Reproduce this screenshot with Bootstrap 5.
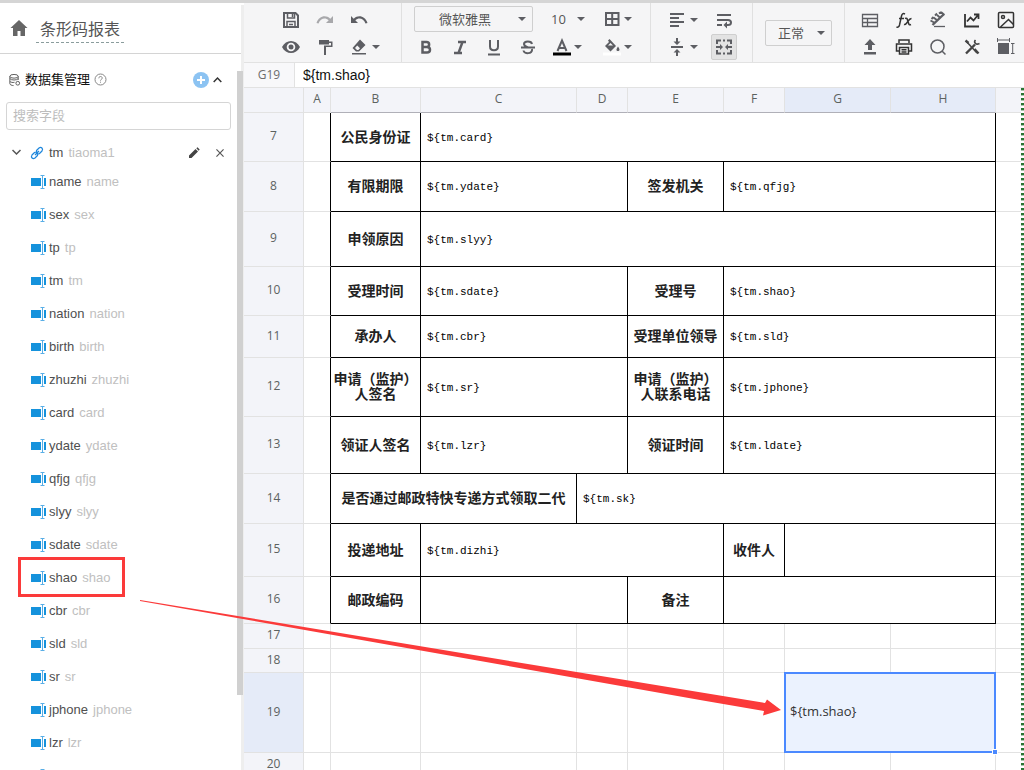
<!DOCTYPE html>
<html lang="zh-CN">
<head>
<meta charset="utf-8">
<meta name="viewport" content="width=device-width, initial-scale=1">
<title>条形码报表</title>
<link href="https://cdn.jsdelivr.net/npm/bootstrap@5.3.0/dist/css/bootstrap.min.css" rel="stylesheet">
<style>
:root { --ink: #5d5e63; --line: #e2e2e2; --head: #f3f4f9; --pick: #4b89ff; --mark-red: #fb3a3a; }
body { font-family: "Open Sans", "Noto Sans CJK SC", sans-serif; font-size: 13px; line-height: 20px; color: #333; border-top: 3px solid #d5d5d5; background: #fff; }
svg { display: block; }
.icon { width: 18px; height: 18px; fill: none; stroke: currentColor; stroke-width: 2; }
.icon-solid { fill: currentColor; stroke: none; }

/* sidebar */
.sidebar { width: 244px; background: #fff; font-family: "Liberation Sans", "Noto Sans CJK SC", sans-serif; }
.sidebar-top { height: 51px; border-bottom: 1px solid #d4d4d4; padding-left: 10px; color: #666; }
.report-title { font-size: 16px; line-height: 24px; color: #555; border-bottom: 1px dashed #8a9c9c; padding: 4px 4px 0; }
.set-title { font-size: 13px; color: #111; }
.set-row { padding: 16px 22px 4px 8px; }
.search-row { padding: 8px 13px 4px 6px; }
.source-row { padding: 9px 20px 3px 8px; color: #4f4f4f; }
.field-search { height: 28px; font-size: 13px; padding: 0 6px; border: 1px solid #d5d5d5; border-radius: 3px; }
.field-search::placeholder { color: #bdbdbd; }
.ghost { color: #c0c0c0; margin-left: 5px; }
.field-list li { height: 33px; padding-left: 31px; }
.field-list a { color: #4f4f4f; }
.field-icon { width: 15px; height: 14px; margin-right: 3px; }
.marked::after { content: ""; position: absolute; left: 18px; top: -5px; width: 107px; height: 40px; border: 3px solid var(--mark-red); }
.scroll-track { right: 0; top: 2px; bottom: 0; width: 7px; border-right: 3px solid #eee; }
.scroll-thumb { right: 1px; top: 68px; height: 624px; width: 6px; background: #d0d0d0; }
.icon-btn { border: 0; background: none; padding: 0; color: var(--ink); display: flex; align-items: center; justify-content: center; }

/* toolbar */
.toolbar { height: 60px; background: #f5f5f6; border-bottom: 1px solid #e2e2e2; color: var(--ink); }
.tool-group { border-right: 1px solid #e0e0e0; }
.group-file { width: 158px; padding-left: 30px; }
.group-font { width: 249px; padding: 3px 0 0 12px; }
.group-align { width: 102px; padding-left: 9px; }
.group-format { width: 92px; padding-left: 12px; }
.tool-grid { display: grid; grid-auto-columns: 34px; grid-template-rows: 26px 28px; grid-auto-flow: column; padding-top: 4px; }
.tool-grid > .icon-btn { width: 100%; }
.caret-col { grid-auto-columns: 10px; margin-left: -5px; }
.wrap-col { grid-auto-columns: 26px; margin-left: 12px; }
.style-row { height: 30px; margin-left: -5px; }
.style-row > .icon-btn { width: 34px; }
.split { display: flex; gap: 2px; }
.caret-btn { width: 10px; }
.caret-btn::before { content: ""; border: 4px solid transparent; border-top-color: var(--ink); border-bottom: 0; }
.tool-active { height: 26px; align-self: center; background: #e3e3e3; border: 1px solid #cfcfcf; border-radius: 2px; }
.pick-box { appearance: none; height: 26px; border: 1px solid #cfcfcf; border-radius: 2px; color: #555; font-size: 13px; line-height: 20px; background: url("data:image/svg+xml,%3Csvg xmlns='http://www.w3.org/2000/svg' width='8' height='4'%3E%3Cpath d='M0 0h8L4 4z' fill='%235d5e63'/%3E%3C/svg%3E") no-repeat right 6px center; }
.pick-font { width: 119px; padding: 0 24px; }
.pick-size { width: 44px; border: 0; margin: 0 14px 0 12px; padding: 0 0 0 6px; background-position: right 4px center; }
.pick-format { width: 67px; padding: 0 12px; }

/* formula bar */
.formula-bar { height: 25px; border-bottom: 1px solid #e2e2e2; }
.cell-name { width: 51px; background: #f8f8fa; border-right: 1px solid #e2e2e2; font-size: 12px; color: #6d6d6d; }
.formula { border: 0; font-family: "Liberation Sans", sans-serif; font-size: 14px; color: #111; padding: 0 8px; }

/* sheet */
.sheet { width: 100%; table-layout: fixed; border-collapse: separate; border-spacing: 0; }
.sheet th, .sheet td { border: 0 solid var(--line); border-width: 0 1px 1px 0; padding: 0; vertical-align: middle; overflow: hidden; }
.sheet thead th, .sheet tbody > tr > th { background: var(--head); font-weight: 400; font-size: 12px; text-align: center; color: #5c625f; }
.sheet thead th { border-bottom-color: #b0b0b8; line-height: 16px; padding-bottom: 2px; }
.sheet thead th:first-child, .sheet thead th:nth-child(2), .sheet thead th:last-child { border-bottom-color: var(--line); }
.sheet tbody > tr > th { padding-bottom: 2px; }
.sheet .current { background: #e5ebf8 !important; }
.form-row > td:not(:last-child) { border-right-color: #000; }
.form-row > td:not(:last-child):not(:nth-child(2)) { border-bottom-color: #000; }
.sheet .caption-cell { font-family: "Noto Sans CJK SC", sans-serif; font-weight: 700; font-size: 14px; line-height: 15px; text-align: center; color: #222; padding-bottom: 2px; }
.sheet .bind { font-family: "Liberation Mono", "Noto Sans CJK SC", monospace; font-size: 11px; color: #000; padding: 1px 0 0 6px; }
.sheet .selected { position: relative; overflow: visible; padding: 0 0 3px 5px; color: #333; background: #ebf2fe; }
.selected::before { content: ""; position: absolute; inset: -1px; border: 2px solid var(--pick); }
.selected::after { content: ""; position: absolute; right: -3px; bottom: -3px; width: 6px; height: 6px; background: var(--pick); border: 1px solid #fff; }
.page-edge { top: 0; bottom: 0; right: 0; width: 3px; background: repeating-linear-gradient(#2c7434 0 2px, #a9c4ac 2px 3px, #fff 3px 5px); }
.guide-arrow { left: 140px; top: 600px; pointer-events: none; }
</style>
</head>
<body class="d-flex vh-100 overflow-hidden">

<svg class="d-none" aria-hidden="true">
  <symbol id="field" viewBox="0 0 15 14"><path fill="#1592dc" d="M0 3h10v8H0zM13 3h2v8h-2z"/><path d="M9.500 .5h4M11.500 .5v13M9.500 13.500h4" stroke="#59aee6" fill="none"/></symbol>
</svg>

<aside class="sidebar flex-shrink-0 position-relative overflow-hidden">
  <header class="sidebar-top d-flex align-items-center">
    <a href="#" class="text-reset me-2" aria-label="首页"><svg width="18" height="18" viewBox="0 0 18 18" fill="currentColor"><path d="M9 1 .5 9H3v8h4.500v-5h3v5H15V9h2.500z"/></svg></a>
    <h1 class="report-title fw-normal m-0">条形码报表</h1>
  </header>

  <section>
    <div class="set-row d-flex align-items-center">
      <svg width="13" height="14" viewBox="0 0 14 14" fill="none" stroke="#555"><ellipse cx="6.500" cy="3" rx="4.500" ry="2"/><path d="M2 3v8c0 1 2 2 4 2M11 3v4M2 5.500c1 2 8 2 9 0M2 8.500c1 1 3 1.500 5 1"/><circle cx="10.500" cy="10.500" r="2"/></svg>
      <h2 class="set-title fw-normal m-0 ms-1 lh-base">数据集管理</h2>
      <svg class="ms-1" width="13" height="13" viewBox="0 0 13 13" fill="none" stroke="#888"><circle cx="6.500" cy="6.500" r="5.500"/><path d="M4.800 5.300c0-2.500 3.500-2.200 3.500-.2 0 1.200-1.800 1.200-1.800 2.500M6.500 8.700v1"/></svg>
      <button type="button" class="icon-btn ms-auto" aria-label="新增数据集"><svg width="16" height="16" viewBox="0 0 16 16"><circle cx="8" cy="8" r="8" fill="#8cc3f2"/><path d="M8 4v8M4 8h8" stroke="#fff" stroke-width="2"/></svg></button>
      <button type="button" class="icon-btn ms-1" aria-label="收起"><svg width="9" height="8" viewBox="0 0 9 8" fill="none" stroke="#333" stroke-width="1.500"><path d="M.7 6 4.500 2l3.800 4"/></svg></button>
    </div>
    <div class="search-row"><input type="search" class="field-search w-100 d-block" placeholder="搜索字段" aria-label="搜索字段"></div>

    <div class="source-row d-flex align-items-center">
      <button type="button" class="icon-btn mx-1" aria-label="折叠"><svg width="9" height="7" viewBox="0 0 9 7" fill="none" stroke="#555" stroke-width="1.500"><path d="M.5 1 4.500 5l4-4"/></svg></button>
      <svg class="ms-1 me-1" width="16" height="14" viewBox="0 0 14 14" fill="none" stroke="#1d86dc" stroke-width="1.200"><path d="M6.500 4.500 9 2c2.200-1.600 4.600.6 3 3L9.500 7.500c-1 .8-2.500.6-3-.3zM7.500 9.500 5 12c-2.200 1.600-4.600-.6-3-3l2.500-2.500c1-.8 2.500-.6 3 .3zM9 5 5 9"/></svg>
      <span>tm</span><span class="ghost">tiaoma1</span>
      <button type="button" class="icon-btn ms-auto" aria-label="编辑"><svg width="12" height="12" viewBox="0 0 12 12" fill="#444"><path d="M1 11V8.500L7.500 2 10 4.500 3.500 11zM8.300 1.300 9.500.3l2.200 2.200-1 1.200z"/></svg></button>
      <button type="button" class="icon-btn ms-3" aria-label="删除"><svg width="8" height="8" viewBox="0 0 9 9" stroke="#555" stroke-width="1.300"><path d="m.5.5 8 8m0-8-8 8"/></svg></button>
    </div>

    <ul class="field-list list-unstyled m-0">
      <li class="d-flex align-items-center"><svg class="field-icon"><use href="#field"/></svg><a href="#" class="text-decoration-none">name</a><span class="ghost">name</span></li>
      <li class="d-flex align-items-center"><svg class="field-icon"><use href="#field"/></svg><a href="#" class="text-decoration-none">sex</a><span class="ghost">sex</span></li>
      <li class="d-flex align-items-center"><svg class="field-icon"><use href="#field"/></svg><a href="#" class="text-decoration-none">tp</a><span class="ghost">tp</span></li>
      <li class="d-flex align-items-center"><svg class="field-icon"><use href="#field"/></svg><a href="#" class="text-decoration-none">tm</a><span class="ghost">tm</span></li>
      <li class="d-flex align-items-center"><svg class="field-icon"><use href="#field"/></svg><a href="#" class="text-decoration-none">nation</a><span class="ghost">nation</span></li>
      <li class="d-flex align-items-center"><svg class="field-icon"><use href="#field"/></svg><a href="#" class="text-decoration-none">birth</a><span class="ghost">birth</span></li>
      <li class="d-flex align-items-center"><svg class="field-icon"><use href="#field"/></svg><a href="#" class="text-decoration-none">zhuzhi</a><span class="ghost">zhuzhi</span></li>
      <li class="d-flex align-items-center"><svg class="field-icon"><use href="#field"/></svg><a href="#" class="text-decoration-none">card</a><span class="ghost">card</span></li>
      <li class="d-flex align-items-center"><svg class="field-icon"><use href="#field"/></svg><a href="#" class="text-decoration-none">ydate</a><span class="ghost">ydate</span></li>
      <li class="d-flex align-items-center"><svg class="field-icon"><use href="#field"/></svg><a href="#" class="text-decoration-none">qfjg</a><span class="ghost">qfjg</span></li>
      <li class="d-flex align-items-center"><svg class="field-icon"><use href="#field"/></svg><a href="#" class="text-decoration-none">slyy</a><span class="ghost">slyy</span></li>
      <li class="d-flex align-items-center"><svg class="field-icon"><use href="#field"/></svg><a href="#" class="text-decoration-none">sdate</a><span class="ghost">sdate</span></li>
      <li class="d-flex align-items-center position-relative marked"><svg class="field-icon"><use href="#field"/></svg><a href="#" class="text-decoration-none">shao</a><span class="ghost">shao</span></li>
      <li class="d-flex align-items-center"><svg class="field-icon"><use href="#field"/></svg><a href="#" class="text-decoration-none">cbr</a><span class="ghost">cbr</span></li>
      <li class="d-flex align-items-center"><svg class="field-icon"><use href="#field"/></svg><a href="#" class="text-decoration-none">sld</a><span class="ghost">sld</span></li>
      <li class="d-flex align-items-center"><svg class="field-icon"><use href="#field"/></svg><a href="#" class="text-decoration-none">sr</a><span class="ghost">sr</span></li>
      <li class="d-flex align-items-center"><svg class="field-icon"><use href="#field"/></svg><a href="#" class="text-decoration-none">jphone</a><span class="ghost">jphone</span></li>
      <li class="d-flex align-items-center"><svg class="field-icon"><use href="#field"/></svg><a href="#" class="text-decoration-none">lzr</a><span class="ghost">lzr</span></li>
      <li class="d-flex align-items-center"><svg class="field-icon"><use href="#field"/></svg></li>
    </ul>
  </section>
  <div class="scroll-track position-absolute"></div>
  <div class="scroll-thumb position-absolute"></div>
</aside>

<main class="flex-grow-1 d-flex flex-column overflow-hidden">
  <div class="toolbar d-flex flex-shrink-0 overflow-hidden" role="toolbar" aria-label="工具栏">
    <div class="tool-group group-file d-flex flex-shrink-0">
      <div class="tool-grid">
        <button type="button" class="icon-btn" aria-label="保存"><svg class="icon" viewBox="0 0 18 18"><path d="M2 2h11.500L16 4.500V16H2z"/><path d="M5.500 2v5h7V2M5 16v-5.500h8V16M10.500 3v3M7 13.500h4" stroke-width="1.500"/></svg></button>
        <button type="button" class="icon-btn" aria-label="预览"><svg class="icon icon-solid" viewBox="0 0 18 18"><path fill-rule="evenodd" d="M0 9c4-8 14-8 18 0-4 8-14 8-18 0zm9-4.300a4.300 4.300 0 1 0 0 8.600 4.300 4.300 0 0 0 0-8.600zM9 6.500a2.500 2.500 0 1 1 0 5 2.500 2.500 0 0 1 0-5z"/></svg></button>
        <button type="button" class="icon-btn" aria-label="重做"><svg class="icon icon-solid opacity-50" viewBox="0 0 18 18"><path d="M17 5v7h-7l2.700-2.700C9 6 4.500 7.500 2.500 12.500L.5 12C3 5 9.500 3.500 14.300 7.700z"/></svg></button>
        <button type="button" class="icon-btn" aria-label="格式刷"><svg class="icon icon-solid" viewBox="0 0 18 18"><path d="M3 2h10v1.500h3.500V9H10v8H8V7.500h7V5h-2v1.500H3z"/></svg></button>
        <button type="button" class="icon-btn" aria-label="撤销"><svg class="icon icon-solid" viewBox="0 0 18 18"><path d="M1 5v7h7L5.300 9.300C9 6 13.500 7.500 15.500 12.500l2-.5C15 5 8.500 3.500 3.700 7.700z"/></svg></button>
        <button type="button" class="icon-btn" aria-label="清除"><svg class="icon icon-solid" viewBox="0 0 18 18"><path fill-rule="evenodd" d="M10 1.500 15.500 7 9 13.500H6L2.500 10zM5 10l2 2h1.300l1.700-1.700-2.800-2.800zM2 15h14v1.500H2z"/></svg></button>
      </div>
      <div class="tool-grid caret-col"><span></span><button type="button" class="icon-btn caret-btn" aria-label="清除选项"></button></div>
    </div>

    <div class="tool-group group-font flex-shrink-0">
      <div class="d-flex">
        <select class="pick-box pick-font" aria-label="字体"><option>微软雅黑</option></select>
        <select class="pick-box pick-size" aria-label="字号"><option>10</option></select>
        <div class="split">
          <button type="button" class="icon-btn" aria-label="边框"><svg class="icon" viewBox="0 0 18 18"><path d="M3 3h12.500v12H3zM9.200 3v12M3 9h12.500"/></svg></button>
          <button type="button" class="icon-btn caret-btn" aria-label="边框选项"></button>
        </div>
      </div>
      <div class="style-row d-flex">
        <button type="button" class="icon-btn" aria-label="加粗"><svg class="icon" viewBox="0 0 18 18"><path d="M5.500 4h4c3.500 0 3.500 5 0 5h-4zM5.500 9H10c4 0 4 5.500 0 5.500H5.500z" stroke-width="2.500"/></svg></button>
        <button type="button" class="icon-btn" aria-label="斜体"><svg class="icon" viewBox="0 0 18 18"><path d="M7 4h8M3 15h8M11.500 4l-4 11" stroke-width="2.400"/></svg></button>
        <button type="button" class="icon-btn" aria-label="下划线"><svg class="icon" viewBox="0 0 18 18"><path d="M5 2v6.500c0 5 8 5 8 0V2M3 16.500h12"/></svg></button>
        <button type="button" class="icon-btn" aria-label="删除线"><svg class="icon" viewBox="0 0 18 18"><path d="M2 9.500h14M13 6c-.5-3.500-8-3.500-8 0 0 2 2 2.500 4 3.500M13 11c1 5-8 5.500-8.500 1.500"/></svg></button>
        <div class="split ms-2">
          <button type="button" class="icon-btn" aria-label="文字颜色"><svg class="icon" viewBox="0 0 18 18"><path d="M4.500 13 9 2.500 13.500 13M6 10h6"/><path d="M0 16h18" stroke="#000" stroke-width="3"/></svg></button>
          <button type="button" class="icon-btn caret-btn" aria-label="颜色选项"></button>
        </div>
        <div class="split ms-3 ps-1">
          <button type="button" class="icon-btn" aria-label="填充颜色"><svg class="icon icon-solid" viewBox="0 0 18 18"><path fill-rule="evenodd" d="M6.500 1 13 8l-5.500 5.500L2 8l4-4-1-1.500zM7.500 5 5 7.500h5zM15 8.500c2.500 3.500 1.500 4.500 0 4.500s-2.500-1 0-4.500z"/><path fill="#fff" d="M0 14.500h18v3H0z"/></svg></button>
          <button type="button" class="icon-btn caret-btn" aria-label="填充选项"></button>
        </div>
      </div>
    </div>

    <div class="tool-group group-align d-flex flex-shrink-0">
      <div class="tool-grid">
        <button type="button" class="icon-btn" aria-label="水平对齐"><svg class="icon" viewBox="0 0 18 18"><path d="M2 3h14M2 7h9M2 11h14M2 15h9"/></svg></button>
        <button type="button" class="icon-btn" aria-label="垂直对齐"><svg class="icon" viewBox="0 0 18 18"><path d="M3 9h12M9 0v4M9 18v-4"/><path class="icon-solid" d="M5.500 3.500h7L9 7zM5.500 14.500h7L9 11z"/></svg></button>
      </div>
      <div class="tool-grid caret-col">
        <button type="button" class="icon-btn caret-btn" aria-label="水平对齐选项"></button>
        <button type="button" class="icon-btn caret-btn" aria-label="垂直对齐选项"></button>
      </div>
      <div class="tool-grid wrap-col">
        <button type="button" class="icon-btn" aria-label="自动换行"><svg class="icon" viewBox="0 0 18 18"><path d="M2 4h14M2 9h11c4 0 4 5 0 5h-2M2 14h5"/><path class="icon-solid" d="M12 10.500v7L8.500 14z"/></svg></button>
        <button type="button" class="icon-btn tool-active" aria-label="合并单元格" aria-pressed="true"><svg class="icon" viewBox="0 0 18 18"><path d="M6 2.500H2V6M12 2.500h4V6M6 15.500H2V12M12 15.500h4V12M8 2.500h2M8 15.500h2M1 9h4M17 9h-4"/><path class="icon-solid" d="M5 6v6l3-3zM13 6v6l-3-3z"/></svg></button>
      </div>
    </div>

    <div class="tool-group group-format d-flex align-items-center flex-shrink-0">
      <select class="pick-box pick-format" aria-label="数字格式"><option>正常</option></select>
    </div>

    <div class="tool-grid ps-2">
      <button type="button" class="icon-btn" aria-label="表格"><svg class="icon" viewBox="0 0 18 18"><path d="M1.500 3.500h15v12h-15zM1.500 7.500h15M1.500 11.500h15M6.500 7.500v8" stroke-width="1.300"/></svg></button>
      <button type="button" class="icon-btn" aria-label="导出"><svg class="icon icon-solid" viewBox="0 0 18 18"><path d="M9 1 14.500 7H11v5H7V7H3.500zM3 14h12v2.500H3z"/></svg></button>
      <button type="button" class="icon-btn" aria-label="函数"><svg class="icon" viewBox="0 0 18 18"><path stroke="#333" stroke-width="1.500" d="M10 3c-2-1-3 0-3.500 2L4.500 14c-.5 2-1.500 2.500-3 2M4 7.500h5M10 7.500c2-1 2 0 3 3s1 4 3 3M16.500 7.500c-2 0-3 2-4 3.500s-2 3-3.500 2.500"/></svg></button>
      <button type="button" class="icon-btn" aria-label="打印"><svg class="icon" viewBox="0 0 18 18"><path stroke="#333" stroke-width="1.500" d="M4 5V2h10v3M4 13H1.500V6h15v7H14M4.500 9.500h9V16h-9zM6.500 11.700h5M6.500 14h5"/></svg></button>
      <button type="button" class="icon-btn" aria-label="标尺"><svg class="icon" viewBox="0 0 18 18"><path stroke-width="1.300" d="M5 15.500h11"/><path stroke-width="2.400" d="M3.500 14 14.500 3.500"/><path stroke-width="1.800" d="M1.500 9.500 6 12M4.500 6.500l4 3M8 4l3.500 3M12 1l3.500 3M2.500 8l2-2M6 4.500l2-2M10 2.500 12 1"/></svg></button>
      <button type="button" class="icon-btn" aria-label="搜索"><svg class="icon" viewBox="0 0 18 18"><g stroke-width="1.500"><circle cx="8.500" cy="8.500" r="6.500"/><path d="m13 13 3.500 3.500"/></g></svg></button>
      <button type="button" class="icon-btn" aria-label="图表"><svg class="icon" viewBox="0 0 18 18"><path stroke="#333" stroke-width="1.800" d="M2 3v12.500h14M4 10.500l3.500-4 3 3L15 4M11 3.500h4.500V8"/></svg></button>
      <button type="button" class="icon-btn" aria-label="工具"><svg class="icon" viewBox="0 0 18 18"><g stroke="#444"><path stroke-width="1.500" d="m3 3 11 12"/><path d="M3 15.500 12 6.500M11.500 11l4 4.500M2.500 2.500l3 2.500" stroke-width="2.400"/><path stroke-width="1.600" d="M12.500 2c-2 2 0 5.500 4 3.500"/></g></svg></button>
      <button type="button" class="icon-btn" aria-label="图片"><svg class="icon" viewBox="0 0 18 18"><g stroke="#333" stroke-width="1.500"><rect x="1.500" y="1.500" width="15" height="15" rx="1"/><circle cx="6" cy="6" r="1.500"/><path d="m3.500 16 8-7.500 5 5"/></g></svg></button>
      <button type="button" class="icon-btn" aria-label="尺寸"><svg class="icon" viewBox="0 0 18 18"><path class="icon-solid" d="M1 5h11v11H1z"/><path d="M.5 0v4M12.500 0v4M.5 2h12M14 5.500h3.500M14 15.500h3.500M15.700 5.500v10" stroke-width="1"/></svg></button>
    </div>
  </div>

  <div class="formula-bar d-flex flex-shrink-0">
    <div class="cell-name d-flex align-items-center justify-content-center flex-shrink-0">G19</div>
    <input class="formula flex-grow-1" type="text" value="${tm.shao}" aria-label="公式">
  </div>

  <div class="position-relative flex-grow-1 overflow-hidden">
    <table class="sheet">
      <colgroup>
        <col style="width:60px"><col style="width:27px"><col style="width:90px"><col style="width:156px"><col style="width:51px"><col style="width:96px"><col style="width:61px"><col style="width:106px"><col style="width:105px"><col>
      </colgroup>
      <thead>
        <tr style="height:25px"><th></th><th>A</th><th>B</th><th>C</th><th>D</th><th>E</th><th>F</th><th class="current">G</th><th class="current">H</th><th></th></tr>
      </thead>
      <tbody>
        <tr class="form-row" style="height:49px"><th>7</th><td></td><td class="caption-cell">公民身份证</td><td class="bind" colspan="6">${tm.card}</td><td></td></tr>
        <tr class="form-row" style="height:50px"><th>8</th><td></td><td class="caption-cell">有限期限</td><td class="bind" colspan="2">${tm.ydate}</td><td class="caption-cell">签发机关</td><td class="bind" colspan="3">${tm.qfjg}</td><td></td></tr>
        <tr class="form-row" style="height:55px"><th>9</th><td></td><td class="caption-cell">申领原因</td><td class="bind" colspan="6">${tm.slyy}</td><td></td></tr>
        <tr class="form-row" style="height:49px"><th>10</th><td></td><td class="caption-cell">受理时间</td><td class="bind" colspan="2">${tm.sdate}</td><td class="caption-cell">受理号</td><td class="bind" colspan="3">${tm.shao}</td><td></td></tr>
        <tr class="form-row" style="height:42px"><th>11</th><td></td><td class="caption-cell">承办人</td><td class="bind" colspan="2">${tm.cbr}</td><td class="caption-cell">受理单位领导</td><td class="bind" colspan="3">${tm.sld}</td><td></td></tr>
        <tr class="form-row" style="height:59px"><th>12</th><td></td><td class="caption-cell">申请（监护）人签名</td><td class="bind" colspan="2">${tm.sr}</td><td class="caption-cell">申请（监护）人联系电话</td><td class="bind" colspan="3">${tm.jphone}</td><td></td></tr>
        <tr class="form-row" style="height:57px"><th>13</th><td></td><td class="caption-cell">领证人签名</td><td class="bind" colspan="2">${tm.lzr}</td><td class="caption-cell">领证时间</td><td class="bind" colspan="3">${tm.ldate}</td><td></td></tr>
        <tr class="form-row" style="height:50px"><th>14</th><td></td><td class="caption-cell" colspan="2">是否通过邮政特快专递方式领取二代</td><td class="bind" colspan="5">${tm.sk}</td><td></td></tr>
        <tr class="form-row" style="height:53px"><th>15</th><td></td><td class="caption-cell">投递地址</td><td class="bind" colspan="3">${tm.dizhi}</td><td class="caption-cell">收件人</td><td colspan="2"></td><td></td></tr>
        <tr class="form-row" style="height:47px"><th>16</th><td></td><td class="caption-cell">邮政编码</td><td colspan="2"></td><td class="caption-cell">备注</td><td colspan="3"></td><td></td></tr>
        <tr style="height:25px"><th>17</th><td></td><td></td><td></td><td></td><td></td><td></td><td></td><td></td><td></td></tr>
        <tr style="height:24px"><th>18</th><td></td><td></td><td></td><td></td><td></td><td></td><td></td><td></td><td></td></tr>
        <tr style="height:80px"><th class="current">19</th><td></td><td></td><td></td><td></td><td></td><td></td><td class="selected" colspan="2">${tm.shao}</td><td></td></tr>
        <tr style="height:25px"><th>20</th><td></td><td></td><td></td><td></td><td></td><td></td><td></td><td></td><td></td></tr>
      </tbody>
    </table>
    <div class="page-edge position-absolute"></div>
  </div>
</main>

<svg class="guide-arrow position-absolute" width="642" height="116" viewBox="0 0 642 116" aria-hidden="true"><path fill="#fb3a3a" d="M0 0 625 103l2-3.500L641 110l-18 5.500 1-4.500L560 100 100 18.500 0 1z"/></svg>

<script src="https://cdn.jsdelivr.net/npm/bootstrap@5.3.0/dist/js/bootstrap.bundle.min.js"></script>
</body>
</html>
